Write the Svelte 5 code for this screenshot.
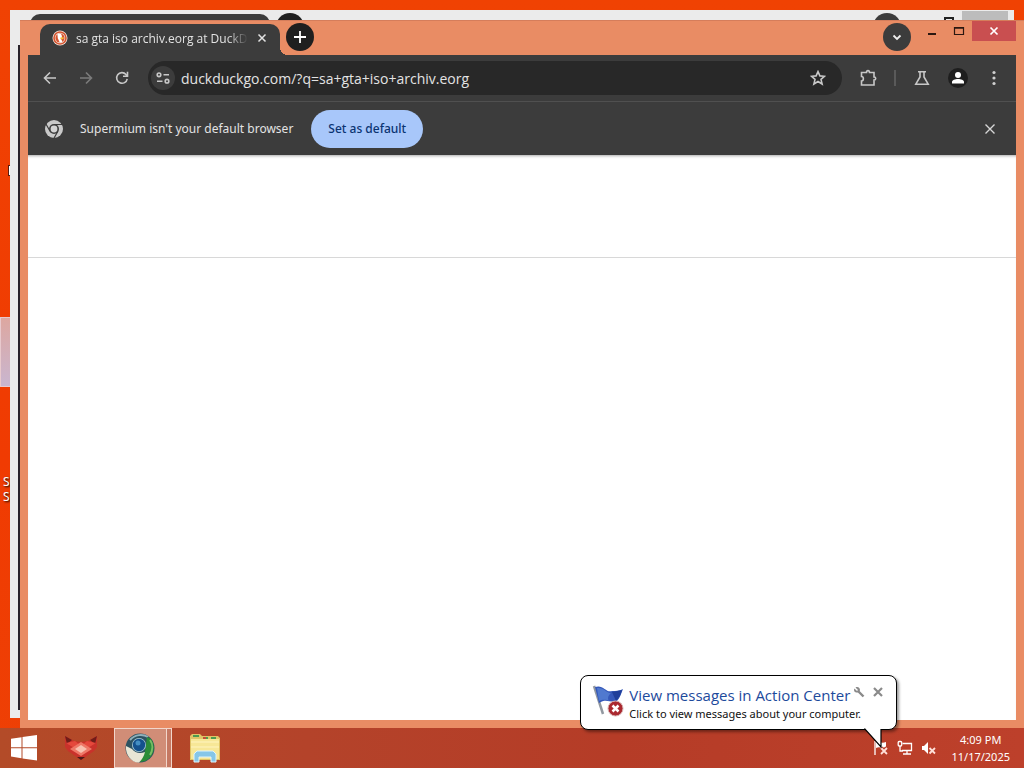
<script>
  let query = $state("sa+gta+iso+archiv.eorg");
  let address = $derived(`duckduckgo.com/?q=${query}`);
  let showInfobar = $state(true);
  let showBalloon = $state(true);
</script>

<div class="desktop">
  <div class="workspace">
    <button class="shortcut selected" aria-label="Selected shortcut"></button>
    <div class="shortcut-label">S<br />S</div>
    <div class="shortcut-arrow"></div>

    <!-- window behind -->
    <div class="back-window">
      <div class="back-tab"></div>
      <div class="back-new"></div>
      <div class="back-search"></div>
      <div class="back-max"></div>
      <div class="back-close"></div>
      <div class="back-edge"></div>
    </div>

    <!-- browser -->
    <main class="window">
      <header class="titlebar">
        <div class="tab">
          <svg class="favicon" viewBox="0 0 16 16" width="16" height="16">
            <circle cx="8" cy="8" r="7.5" fill="#f3e9e2" />
            <circle cx="8" cy="8" r="6" fill="none" stroke="#d5542f" stroke-width="1.6" />
            <circle cx="8" cy="8" r="4.6" fill="#d5542f" />
            <path d="M5.400 3.800c2-.9 4.300 0 4.400 2l.2 1.600-1.200 1.200 1.800 3.400-2.800.7L5.800 8.300Z" fill="#fff" />
            <path d="M8.400 7.400l3.400-.2-.4 1.800-3 .2Z" fill="#f5bd38" />
          </svg>
          <span class="tab-title">sa gta iso archiv.eorg at DuckDuckGo</span>
          <button class="tab-close" aria-label="Close tab">
            <svg viewBox="0 0 10 10" width="10" height="10"><path d="M1.500 1.500l7 7M8.500 1.500l-7 7" stroke="#e3e3e3" stroke-width="1.500" /></svg>
          </button>
        </div>
        <button class="round new-tab" aria-label="New tab">
          <svg viewBox="0 0 14 14" width="14" height="14"><path d="M7 1v12M1 7h12" stroke="#fff" stroke-width="1.800" /></svg>
        </button>
        <div class="spacer"></div>
        <button class="round search-tabs" aria-label="Search tabs">
          <svg viewBox="0 0 10 10" width="10" height="10"><path d="M1.500 3.500L5 7l3.500-3.500" fill="none" stroke="#eee" stroke-width="1.800" /></svg>
        </button>
        <div class="captions">
          <button class="caption" aria-label="Minimize">
            <svg viewBox="0 0 12 12" width="12" height="12"><path d="M2 9h8" stroke="#2b1710" stroke-width="2" /></svg>
          </button>
          <button class="caption" aria-label="Maximize">
            <svg viewBox="0 0 12 12" width="12" height="12"><path d="M1.500 2.500h9v7h-9zM1.500 3.200h9" fill="none" stroke="#2b1710" stroke-width="1.200" /></svg>
          </button>
          <button class="caption close" aria-label="Close">
            <svg viewBox="0 0 10 10" width="10" height="10"><path d="M1.500 1.500l7 7M8.500 1.500l-7 7" stroke="#fff" stroke-width="1.700" /></svg>
          </button>
        </div>
      </header>

      <div class="toolbar">
        <button class="tool" aria-label="Back">
          <svg viewBox="0 0 16 16" width="16" height="16"><path d="M14 8H2.800M8 2.500L2.500 8 8 13.500" /></svg>
        </button>
        <button class="tool dim" aria-label="Forward">
          <svg viewBox="0 0 16 16" width="16" height="16"><path d="M2 8h11.200M8 2.500L13.500 8 8 13.500" /></svg>
        </button>
        <button class="tool" aria-label="Reload">
          <svg viewBox="0 0 16 16" width="16" height="16"><path d="M13.200 8.800A5.300 5.300 0 1 1 12 4.500l1.500 1.600M13.500 1.800v4.500H9" /></svg>
        </button>
        <div class="omnibox">
          <button class="site-info" aria-label="View site information">
            <svg viewBox="0 0 16 16" width="16" height="16">
              <circle cx="4" cy="4.800" r="1.800" /><path d="M8.500 4.800H14M2 11.200h5.500" /><circle cx="12" cy="11.200" r="1.800" />
            </svg>
          </button>
          <input aria-label="Address and search bar" value={address} spellcheck="false" />
          <button class="tool star" aria-label="Bookmark this tab">
            <svg viewBox="0 0 16 16" width="16" height="16"><path d="M8 1.600l1.900 4.300 4.600.4-3.500 3.100 1.100 4.600L8 11.500 3.900 14 5 9.400 1.500 6.300l4.600-.4Z" /></svg>
          </button>
        </div>
        <button class="tool" aria-label="Extensions">
          <svg viewBox="0 0 18 18" width="18" height="18"><path d="M2.500 3.500h5c0-2.500 3-2.500 3 0H15v4.500c2.300 0 2.300 3 0 3V16H2.500v-4c2.500 0 2.500-4.500 0-4.500Z" /></svg>
        </button>
        <span class="divider"></span>
        <button class="tool" aria-label="Experiments">
          <svg viewBox="0 0 16 16" width="16" height="16"><path d="M4 1.800h8M6 2v5L1.800 14.200h12.400L10 7V2" /></svg>
        </button>
        <button class="tool profile" aria-label="Profile">
          <svg viewBox="0 0 20 20" width="20" height="20">
            <circle cx="10" cy="10" r="10" fill="#1e1e1e" stroke="none" />
            <circle cx="10" cy="7" r="3" fill="#fff" stroke="none" />
            <path d="M4 15.500v-1.500c0-4 12-4 12 0v1.500Z" fill="#fff" stroke="none" />
          </svg>
        </button>
        <button class="tool" aria-label="Menu">
          <svg viewBox="0 0 16 16" width="16" height="16"><g fill="#d0d0d0" stroke="none"><circle cx="8" cy="2.500" r="1.600" /><circle cx="8" cy="8" r="1.600" /><circle cx="8" cy="13.500" r="1.600" /></g></svg>
        </button>
      </div>

      {#if showInfobar}
        <div class="infobar">
          <svg viewBox="0 0 20 20" width="20" height="20">
            <circle cx="10" cy="10" r="9" fill="#c9c9c9" />
            <circle cx="10" cy="10" r="5" fill="#3c3c3c" />
            <path d="M10 5.500h9M6.100 12.300L1.800 4.800M13.900 12.300L9.500 20" stroke="#3c3c3c" stroke-width="1.200" />
            <circle cx="10" cy="10" r="3.400" fill="#d3d3d3" />
          </svg>
          <span>Supermium isn't your default browser</span>
          <button class="set-default">Set as default</button>
          <button class="infobar-close" aria-label="Dismiss" onclick={() => (showInfobar = false)}>
            <svg viewBox="0 0 12 12" width="12" height="12"><path d="M1.500 1.500l9 9M10.500 1.500l-9 9" stroke="#d6d6d6" stroke-width="1.400" /></svg>
          </button>
        </div>
      {/if}

      <section class="page">
        <div class="page-header"></div>
      </section>
    </main>
  </div>

  <footer class="taskbar">
    <button class="start" aria-label="Start">
      <svg viewBox="0 0 28 28" width="28" height="28"><path d="M1 4.800l10.500-1.600v10H1ZM12.500 3L27 1v12.200H12.500ZM1 14.200h10.500v10L1 22.600ZM12.500 14.200H27V26.500l-14.500-2.100Z" fill="#fff" /></svg>
    </button>
    <button class="app" aria-label="Fox">
      <svg viewBox="0 0 34 28" width="34" height="28">
        <path d="M1 2l9 5 7 1 7-1 9-5v11l-3 4-13 9-13-9-3-4Z" fill="#c9322b" />
        <path d="M1 2l7 4-5 4ZM33 2l-7 4 5 4Z" fill="#701d19" />
        <path d="M2 9l9-2 6 5 6-5 9 2-15 9Z" fill="#e5483c" />
        <path d="M6 15l11-7 11 7-11 7Z" fill="#ee7867" />
        <path d="M11 15l6-4 6 4-6 4Z" fill="#f8c1b0" />
        <path d="M13 23h8l-4 3Z" fill="#4b1917" />
      </svg>
    </button>
    <button class="app active" aria-label="Supermium">
      <svg viewBox="0 0 32 32" width="32" height="32">
        <circle cx="16" cy="16" r="14.500" fill="#2d5261" />
        <path d="M6 8c5-6 13-6 18-3" fill="none" stroke="#8fb0ba" stroke-width="2" />
        <path d="M23 5l4 2c6 8 2 19-6 22l-5 1 5-11Z" fill="#2b8c38" />
        <path d="M26 8c3 4 3 10 0 15" fill="none" stroke="#79bd68" stroke-width="2" />
        <path d="M2 14c2 1 4 2 6 3 3 4 8 5 13 3-1 4-3 8-6 10.500C8 31 1 23 2 14Z" fill="#e9e6d5" />
        <circle cx="15" cy="13" r="7" fill="#a8c9d5" />
        <circle cx="15" cy="13" r="6.200" fill="#14518d" />
        <circle cx="14" cy="11" r="2.500" fill="#438ec3" />
      </svg>
    </button>
    <button class="app" aria-label="File Explorer">
      <svg viewBox="0 0 34 30" width="34" height="30">
        <path d="M2 3l2-2h8l2 2h16l2 2v22H2Z" fill="#dfc567" />
        <path d="M3 6h28v20H3Z" fill="#f7e797" />
        <path d="M5 3h6M15 5h5M23 5h5" stroke="#4c9b50" stroke-width="2" />
        <path d="M15 5h3" stroke="#c44d3a" stroke-width="2" />
        <path d="M3 9h28M3 14h28" stroke="#fff4bf" />
        <path d="M6 29v-8l3-3h16l3 3v8h-5v-5H11v5Z" fill="#86c6e8" stroke="#dff4fb" />
      </svg>
    </button>
    <div class="spacer"></div>
    <div class="tray">
      <button aria-label="Action Center">
        <svg viewBox="0 0 16 16" width="16" height="16"><path d="M2 1v14" stroke="#fff" stroke-width="1.300" /><path d="M3 2c3-1 5 2 10 0v5c-4 2-6-1-10 1Z" fill="#fff" /><path d="M8 8l6 6M14 8l-6 6" stroke="#b93e2a" stroke-width="4" /><path d="M8 8l6 6M14 8l-6 6" stroke="#ffe0d8" stroke-width="1.800" /></svg>
      </button>
      <button aria-label="Network">
        <svg viewBox="0 0 16 16" width="16" height="16" fill="none" stroke="#fff" stroke-width="1.300"><path d="M5.500 3.500h9v7H5M10 10.500V14M6 14h8M3 6v5h3" /><rect x="1.200" y="1.500" width="3.500" height="4.500" rx="1" /></svg>
      </button>
      <button aria-label="Volume muted">
        <svg viewBox="0 0 16 16" width="16" height="16"><path d="M1 6h2l4-4v12l-4-4H1Z" fill="#fff" /><path d="M8.500 8l5.500 5.500M14 8l-5.500 5.500" stroke="#ffe0d8" stroke-width="1.800" /></svg>
      </button>
    </div>
    <time class="clock">4:09 PM<br />11/17/2025</time>
  </footer>

  {#if showBalloon}
    <aside class="balloon">
      <svg class="flag" viewBox="0 0 34 34" width="34" height="34">
        <path d="M3 2l9 28" stroke="#9298a0" stroke-width="2.500" />
        <path d="M4 3c8-3 11 6 17 4 4 0 7 0 11-2-2 5-3 9-6 12-7 2-11-3-18 2Z" fill="#3558b9" />
        <path d="M6 4c7-1 9 5 14 5-4 3-3 7-2 8-4-2-7-1-10 0Z" fill="#5079cf" />
        <path d="M21 8l4 9c3-3 5-7 6-11Z" fill="#203f9a" />
        <circle cx="24.500" cy="24.500" r="7.500" fill="#aa2930" stroke="#d8b3b3" />
        <path d="M21.500 21.500l6 6M27.500 21.500l-6 6" stroke="#fff" stroke-width="2.500" />
      </svg>
      <div class="message">
        <a href="#action-center">View messages in Action Center</a>
        <p>Click to view messages about your computer.</p>
      </div>
      <div class="balloon-tools">
        <button aria-label="Notification settings">
          <svg viewBox="0 0 12 12" width="12" height="12"><path d="M5 5l5.500 5.500" stroke="#8a8a8a" stroke-width="2.400" /><path d="M2.500 1.500L5 4 4 5 1.500 2.500C0 5 2.500 7 4.700 6.500L7 4.500C7.200 2 5 .300 2.500 1.500Z" fill="#8a8a8a" /></svg>
        </button>
        <button aria-label="Close notification" onclick={() => (showBalloon = false)}>
          <svg viewBox="0 0 12 12" width="12" height="12"><path d="M2 2l8 8M10 2l-8 8" stroke="#8a8a8a" stroke-width="2.200" /></svg>
        </button>
      </div>
      <svg class="tail" viewBox="0 0 18 21" width="18" height="21"><path d="M1 0v1l16 18V0Z" fill="#fff" /><path d="M0 1h1l16 18V1" fill="none" stroke="#000" stroke-width="1.200" /></svg>
    </aside>
  {/if}
</div>

<style>
  :global(body) {
    background: #f04000;
  }

  .desktop {
    position: relative;
    display: flex;
    flex-direction: column;
    height: 100vh;
    overflow: hidden;
    font-family: "Noto Sans", "Open Sans", sans-serif;
    font-size: 12px;
    background: linear-gradient(#f04203, #f03b02 60%, #ee4005);
  }

  button {
    display: flex;
    align-items: center;
    justify-content: center;
    flex: none;
    padding: 0;
    border: 0;
    background: none;
    font: inherit;
  }

  .spacer {
    flex: 1;
  }

  .workspace {
    position: relative;
    flex: 1;
    min-height: 0;
  }

  .shortcut {
    position: absolute;
    left: 0;
    top: 317px;
    width: 40px;
    height: 70px;
    border: 1px solid #e8c9cd;
    background: linear-gradient(#dda7a0, #c9b6d0);
  }

  .shortcut-label {
    position: absolute;
    left: 3px;
    top: 474px;
    line-height: 15px;
    color: #fff;
    text-shadow: 1px 1px 2px #000;
  }

  .shortcut-arrow {
    position: absolute;
    left: 8px;
    top: 165px;
    width: 10px;
    height: 9px;
    border: 1px solid #5a1b0c;
    background: #fff;
  }

  /* window behind */
  .back-window {
    position: absolute;
    inset: 10px 10px 10px 10px;
    overflow: hidden;
    background: #ebebeb;
  }

  .back-window > div {
    position: absolute;
  }

  .back-tab {
    left: 20px;
    top: 4px;
    width: 240px;
    height: 40px;
    border-radius: 10px;
    background: #3c3c3c;
  }

  .back-new,
  .back-search {
    top: 3px;
    width: 28px;
    height: 28px;
    border-radius: 50%;
    background: #202020;
  }

  .back-new {
    left: 266px;
  }

  .back-search {
    right: 113px;
    background: #3c3c3c;
  }

  .back-max {
    right: 60px;
    top: 7px;
    width: 6px;
    height: 6px;
    border: 2px solid #222;
  }

  .back-close {
    right: 6px;
    top: 1px;
    width: 46px;
    height: 20px;
    background: #bcbcbc;
  }

  .back-edge {
    left: 8px;
    top: 35px;
    bottom: 8px;
    width: 4px;
    background: #28222a;
  }

  /* browser window */
  .window {
    position: absolute;
    inset: 20px 0 0 20px;
    display: flex;
    flex-direction: column;
    box-sizing: border-box;
    padding: 0 8px 8px;
    border-top: 1px solid #d57d5b;
    background: #e98c64;
  }

  .titlebar {
    display: flex;
    height: 34px;
    padding-left: 12px;
  }

  .tab {
    position: relative;
    display: flex;
    align-items: center;
    width: 240px;
    box-sizing: border-box;
    margin-top: 3px;
    padding: 0 12px 3px;
    border-radius: 10px 10px 0 0;
    color: #e3e3e3;
    background: #3c3c3c;
  }

  .tab::after {
    content: "";
    position: absolute;
    left: 100%;
    bottom: 0;
    width: 8px;
    height: 8px;
    background: radial-gradient(circle at 100% 0, transparent 8px, #3c3c3c 8px);
  }

  .tab-title {
    flex: 1;
    margin: 0 8px;
    overflow: hidden;
    font-family: "Open Sans", "Noto Sans", sans-serif;
    white-space: nowrap;
    mask-image: linear-gradient(90deg, #000 88%, transparent);
  }

  .tab-close {
    width: 12px;
    height: 16px;
  }

  .round {
    width: 28px;
    height: 28px;
    margin-top: 2px;
    border-radius: 50%;
  }

  .new-tab {
    margin-left: 6px;
    background: #1f1f1f;
  }

  .search-tabs {
    margin-right: 7px;
    background: #3c3c3c;
  }

  .captions {
    display: flex;
    align-items: flex-start;
  }

  .caption {
    width: 27px;
    height: 20px;
  }

  .caption.close {
    width: 44px;
    background: #c94f50;
  }

  .toolbar {
    display: flex;
    align-items: center;
    gap: 16px;
    box-sizing: border-box;
    height: 47px;
    padding: 0 12px;
    border-bottom: 1px solid #505050;
    background: #3c3c3c;
  }

  .tool {
    width: 20px;
    height: 28px;
  }

  .tool svg,
  .site-info svg {
    fill: none;
    stroke: #c8c8c8;
    stroke-width: 1.6;
  }

  .dim {
    opacity: 0.45;
  }

  .omnibox {
    display: flex;
    align-items: center;
    flex: 1;
    min-width: 0;
    height: 34px;
    padding: 0 14px 0 3px;
    border-radius: 17px;
    background: #282828;
  }

  .site-info {
    width: 24px;
    height: 24px;
    border-radius: 50%;
    background: #3c3c3c;
  }

  input {
    flex: 1;
    min-width: 0;
    padding: 0 6px;
    border: 0;
    outline: 0;
    font-family: "Open Sans", "Noto Sans", sans-serif;
    font-size: 14px;
    color: #e3e3e3;
    background: none;
  }

  .divider {
    width: 2px;
    height: 16px;
    background: #5a5a5a;
  }

  .infobar {
    display: flex;
    align-items: center;
    height: 53px;
    padding: 0 18px 0 16px;
    color: #e3e3e3;
    background: #3c3c3c;
  }

  .infobar span {
    margin: 0 18px 0 16px;
  }

  .set-default {
    height: 38px;
    padding: 0 17px;
    border-radius: 19px;
    font-weight: 500;
    color: #0b3472;
    background: #a8c7fa;
  }

  .infobar-close {
    width: 16px;
    height: 16px;
    margin-left: auto;
  }

  .page {
    flex: 1;
    background: #fff;
    box-shadow: inset 0 3px 3px -2px #aaa;
  }

  .page-header {
    height: 102px;
    border-bottom: 1px solid #d8d8d8;
  }

  /* taskbar */
  .taskbar {
    display: flex;
    align-items: center;
    height: 40px;
    color: #fff;
    background: linear-gradient(90deg, #b34b28, #b4432a 30%, #b53c27 60%, #bd402b);
  }

  .start {
    width: 48px;
    height: 40px;
  }

  .app {
    width: 58px;
    height: 40px;
    margin-right: 4px;
  }

  .start + .app {
    margin-left: 4px;
  }

  .active {
    box-sizing: border-box;
    padding-right: 6px;
    border: 1px solid #f2d6cb;
    background: linear-gradient(90deg, #d18d77 51px, #f2d6cb 51px, #f2d6cb 52px, #c57862 52px);
  }

  .tray {
    display: flex;
    gap: 8px;
    margin-right: 14px;
  }

  .clock {
    margin-right: 14px;
    font-size: 11px;
    line-height: 17px;
    text-align: center;
  }

  /* notification */
  .balloon {
    position: absolute;
    right: 127px;
    bottom: 38px;
    display: flex;
    box-sizing: border-box;
    height: 55px;
    padding: 8px 12px 0 10px;
    border: 1px solid #000;
    border-radius: 8px;
    background: #fff;
    box-shadow: 2px 2px 3px #0006;
  }

  .message {
    margin: 0 4px;
  }

  .message a {
    display: block;
    font-family: "Open Sans", "Noto Sans", sans-serif;
    font-size: 15px;
    line-height: 22px;
    text-decoration: none;
    color: #1d4a9c;
  }

  .message p {
    margin: 0;
    font-size: 11px;
    line-height: 16px;
    color: #111;
    white-space: nowrap;
  }

  .balloon-tools {
    display: flex;
    align-items: flex-start;
    gap: 7px;
    margin: 2px 0 0 -12px;
  }

  .tail {
    position: absolute;
    right: 14px;
    top: 52px;
  }
</style>
